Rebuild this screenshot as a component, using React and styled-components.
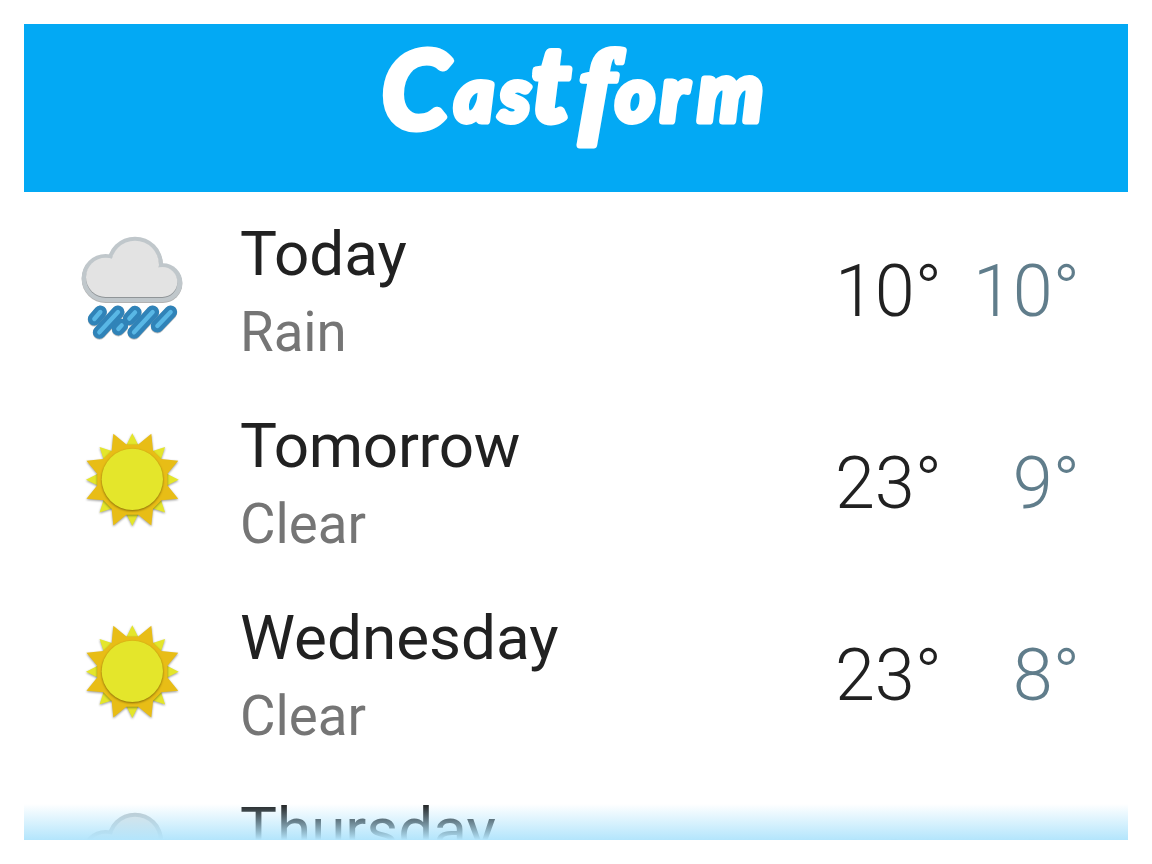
import React from 'react';
import styled, { createGlobalStyle } from 'styled-components';

const GlobalStyle = createGlobalStyle`
  *, *::before, *::after { box-sizing: border-box; }
  body { margin: 0; background: #fff; font-family: Roboto, sans-serif; }
`;

const Page = styled.div`
  height: 864px;
  padding: 24px;
  background: #fff;
  overflow: hidden;
`;

const Panel = styled.main`
  position: relative;
  height: 816px;
  overflow: hidden;
  background: #fff;
`;

const Header = styled.header`
  display: flex;
  justify-content: center;
  height: 168px;
  background: #03a9f4;
`;

const Wordmark = styled.svg`
  display: block;
  width: 400px;
  height: 168px;
  fill: #fff;
  stroke: #fff;
  stroke-width: 7px;
  stroke-linejoin: round;
  stroke-linecap: round;
  font: italic 700 74px Lato, sans-serif;
`;

const Letter = styled.tspan`
  font-size: ${(p) => p.$size || 74}px;
  font-family: ${(p) => (p.$serif ? "'Liberation Serif', serif" : 'Lato, sans-serif')};
`;

const Row = styled.section`
  display: grid;
  grid-template-columns: 126px 1fr 130px 138px;
  align-items: center;
  height: 192px;
  padding: 0 48px 0 46px;
`;

const Summary = styled.div`
  padding: 10px 0 0 44px;
`;

const Day = styled.h2`
  margin: 0;
  color: #212121;
  font-size: 62px;
  font-weight: 400;
  line-height: 78px;
  letter-spacing: ${(p) => p.$tracking || 0}px;
`;

const Condition = styled.p`
  margin: 0;
  color: #757575;
  font-size: 54.6px;
  line-height: 78px;
`;

const Temp = styled.span`
  padding-top: 8px;
  color: ${(p) => (p.$low ? '#607d8b' : '#212121')};
  font-size: 72px;
  font-weight: 300;
  line-height: 84px;
  text-align: right;
`;

const Fade = styled.div`
  position: absolute;
  inset: auto 0 0;
  height: 36px;
  background: linear-gradient(rgba(179, 229, 252, 0), #b3e5fc);
`;

const Icon = styled.svg`
  display: block;
  width: 126px;
  height: 126px;
  overflow: visible;
`;

const polar = (deg, r) => {
  const a = (deg * Math.PI) / 180;
  return `${(187 + r * Math.cos(a)).toFixed(1)},${(188 + r * Math.sin(a)).toFixed(1)}`;
};
const steps = Array.from({ length: 8 }, (_, i) => i * 45);
const orangeRays = steps
  .map((d) => [polar(d + 9.5, 107), polar(d + 22.5, 149), polar(d + 35.5, 107)].join(' '))
  .join(' ');

function Sun() {
  return (
    <Icon viewBox="0 0 378 378">
      <g style={{ filter: 'drop-shadow(0 3px 3px rgba(0,0,0,.4))' }}>
        {steps.map((d) => (
          <polygon key={d} fill="#e4e62b" points={[polar(d - 12, 100), polar(d, 139), polar(d + 12, 100)].join(' ')} />
        ))}
      </g>
      <polygon fill="#e8bd16" points={orangeRays} style={{ filter: 'drop-shadow(0 3px 3px rgba(0,0,0,.4))' }} />
      <circle cx="187" cy="187" r="92" fill="#e4e62b" style={{ filter: 'drop-shadow(0 3px 3px rgba(80,60,0,.65))' }} />
    </Icon>
  );
}

const drops = [
  'M73 282L91 261', 'M88 322L144 261', 'M145 312L155 301',
  'M178 281L195 262', 'M192 322L248 261', 'M262 303L302 261',
];

function Rain() {
  return (
    <Icon viewBox="0 0 378 378" fill="none" strokeLinecap="round">
      <g style={{ filter: 'drop-shadow(0 3px 2px rgba(0,0,0,.3))' }} fill="#c0c7cb">
        <circle cx="195" cy="119" r="84" />
        <circle cx="107" cy="159" r="72" />
        <circle cx="279" cy="173" r="58" />
        <rect x="107" y="140" width="172" height="91" />
      </g>
      <g style={{ filter: 'drop-shadow(0 3px 2px rgba(0,0,0,.25))' }} fill="#e3e3e3">
        <circle cx="195" cy="119" r="72" />
        <circle cx="107" cy="157" r="59" />
        <circle cx="277" cy="171" r="45" />
        <rect x="107" y="130" width="170" height="86" />
      </g>
      <g stroke="#3083b8" strokeWidth="39" style={{ filter: 'drop-shadow(0 2px 2px rgba(0,0,0,.35))' }}>
        {drops.map((d) => <path key={d} d={d} />)}
      </g>
      <g stroke="#59b7e5" strokeWidth="13">
        {drops.map((d) => <path key={d} d={d} />)}
      </g>
    </Icon>
  );
}

const letters = [
  { ch: 'C', x: 6, y: 104, size: 107 },
  { ch: 'a', x: 79 },
  { ch: 's', x: 124 },
  { ch: 't', x: 156, size: 104 },
  { ch: 'f', x: 204, y: 99, size: 104, serif: true },
  { ch: 'o', x: 240 },
  { ch: 'r', x: 285, size: 76 },
  { ch: 'm', x: 322, size: 82 },
];

const forecast = [
  { day: 'Today', condition: 'Rain', high: 10, low: 10, icon: Rain },
  { day: 'Tomorrow', condition: 'Clear', high: 23, low: 9, icon: Sun, tracking: -0.3 },
  { day: 'Wednesday', condition: 'Clear', high: 23, low: 8, icon: Sun },
  { day: 'Thursday', condition: 'Rain', high: 20, low: 9, icon: Rain },
];

export default function App() {
  return (
    <Page>
      <GlobalStyle />
      <Panel>
        <Header>
          <Wordmark viewBox="0 0 400 168">
            <text>
              {letters.map(({ ch, x, y = 97, size, serif }) => (
                <Letter key={ch} x={x} y={y} $size={size} $serif={serif}>{ch}</Letter>
              ))}
            </text>
          </Wordmark>
        </Header>
        {forecast.map(({ day, condition, high, low, tracking, icon: Weather }) => (
          <Row key={day}>
            <Weather />
            <Summary>
              <Day $tracking={tracking}>{day}</Day>
              <Condition>{condition}</Condition>
            </Summary>
            <Temp>{high}°</Temp>
            <Temp $low>{low}°</Temp>
          </Row>
        ))}
        <Fade />
      </Panel>
    </Page>
  );
}
